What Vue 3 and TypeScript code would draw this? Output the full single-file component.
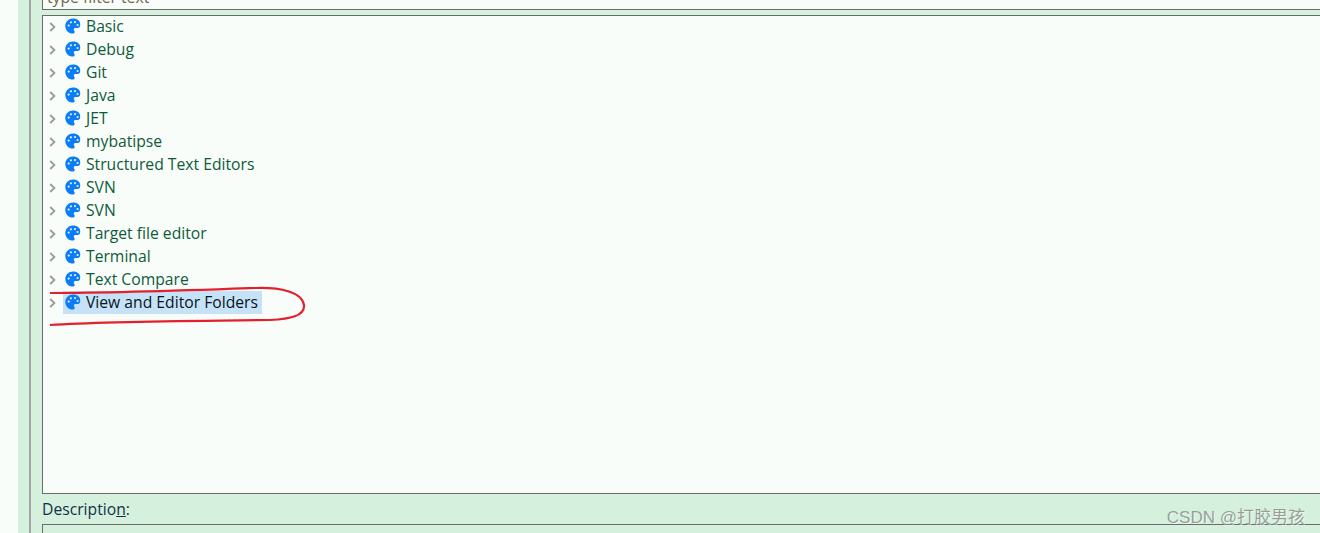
<script setup lang="ts">
const items: string[] = [
  'Basic',
  'Debug',
  'Git',
  'Java',
  'JET',
  'mybatipse',
  'Structured Text Editors',
  'SVN',
  'SVN',
  'Target file editor',
  'Terminal',
  'Text Compare',
  'View and Editor Folders',
]
</script>

<template>
  <div class="page">
    <div class="strip"></div>
    <div class="panel">
      <div class="filter"><span>type filter text</span></div>
      <div class="tree">
        <div v-for="(item, i) in items" :key="i" class="row">
          <svg class="arrow" width="7" height="10" viewBox="0 0 7 10">
            <path d="M1.2 1 L5.4 5 L1.2 9" fill="none" stroke="#9a9c9a" stroke-width="1.8" />
          </svg>
          <div class="label" :class="{ selected: i === items.length - 1 }">
            <svg class="palette" width="16" height="16" viewBox="0 0 16 16">
              <path
                d="M8 .4C3.7.4.3 3.6.3 7.9c0 4.300 3.500 7.700 7.500 7.700 1.300 0 1.900-.8 1.900-1.600 0-1.100-.9-1.500-.9-2.500 0-1 .8-1.500 1.800-1.500h2c1.500 0 2.600-1.200 2.600-3C15.700 2.900 12.300.4 8 .4z"
                fill="#0a7cf5"
              />
              <circle cx="3.700" cy="7.600" r="1.100" fill="#dff0fb" />
              <circle cx="5.900" cy="4.300" r="1.100" fill="#dff0fb" />
              <circle cx="10" cy="4.100" r="1.100" fill="#dff0fb" />
              <circle cx="12.600" cy="7" r="1.100" fill="#dff0fb" />
            </svg>
            <span class="name">{{ item }}</span>
          </div>
        </div>
      </div>
      <div class="desc-label">Descriptio<u>n</u>:</div>
      <div class="desc"></div>
    </div>
    <svg class="ink" width="320" height="60" viewBox="0 0 320 60">
      <path
        d="M50 293 C120 293 200 290 255 288 C280 287 302 292 304 305 C305 316 290 319 270 320 C200 321 110 321 50 325"
        fill="none"
        stroke="#e5202e"
        stroke-width="2.200"
        transform="translate(0 -270)"
      />
    </svg>
    <div class="mark">CSDN @打胶男孩</div>
  </div>
</template>

<style scoped>
.page {
  position: relative;
  display: flex;
  width: 1320px;
  height: 533px;
  overflow: hidden;
  background: #d5f0dc;
  font-family: "Open Sans", "Noto Sans", "Noto Sans CJK SC", sans-serif;
  font-size: 15.7px;
  color: #0f5a3a;
}

.strip {
  width: 18px;
  flex-shrink: 0;
  background: #f8fdf9;
}

.panel {
  flex: 1;
  min-width: 0;
  margin-left: 11px;
  padding-left: 12px;
  border-left: 2px solid #a0a8a2;
  box-sizing: border-box;
  display: flex;
  flex-direction: column;
}

.filter {
  height: 10px;
  box-sizing: border-box;
  margin-left: -1px;
  margin-right: -4px;
  border: 1px solid #6b6b6b;
  border-top: 0;
  background: #f8fdf9;
  padding-left: 4px;
  overflow: hidden;
  color: #6e6650;
  line-height: 1;
  flex-shrink: 0;
}

.filter span {
  display: block;
  margin-top: -10px;
}

.tree {
  height: 479px;
  box-sizing: border-box;
  margin-top: 5px;
  margin-left: -1px;
  margin-right: -4px;
  border: 1px solid #6b6b6b;
  background: #f8fdf9;
  flex-shrink: 0;
}

.row {
  display: flex;
  align-items: center;
  height: 23px;
  padding-left: 6px;
  position: relative;
  top: -1px;
}

.arrow {
  flex-shrink: 0;
  margin-right: 7px;
  margin-top: 1px;
}

.label {
  display: flex;
  align-items: center;
  height: 23px;
  padding: 0 4px 0 2px;
}

.label.selected {
  background: #c5e2f7;
  color: #0a1420;
}

.palette {
  margin-right: 5px;
  margin-top: -1px;
}

.name {
  white-space: nowrap;
  margin-top: -1px;
}

.desc-label {
  height: 30px;
  line-height: 30px;
  margin-left: -1px;
  color: #12304a;
  flex-shrink: 0;
}

.desc {
  flex: 1;
  margin-left: -1px;
  margin-right: -4px;
  border: 1px solid #6b6b6b;
  border-bottom: 0;
}

.ink {
  position: absolute;
  left: 0;
  top: 270px;
  pointer-events: none;
}

.mark {
  position: absolute;
  right: 15px;
  top: 503px;
  font-family: "Liberation Sans", "Noto Sans CJK SC", sans-serif;
  font-size: 17px;
  color: rgba(130, 130, 130, 0.75);
  text-shadow: 1px 1px 0 rgba(255, 255, 255, 0.5);
  white-space: nowrap;
}
</style>
